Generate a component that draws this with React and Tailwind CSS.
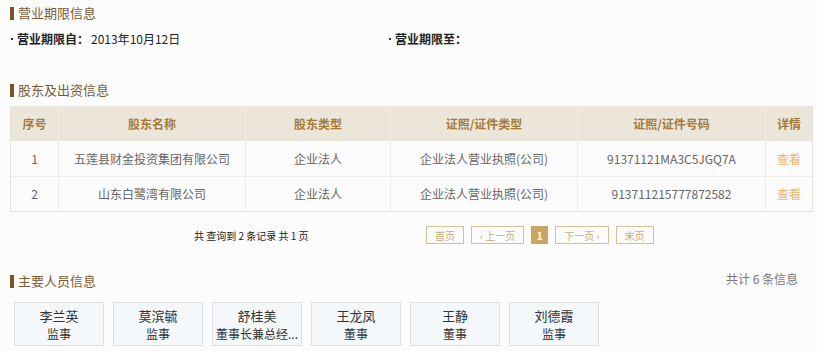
import React from 'react';

const FONT = '"Microsoft YaHei", "Noto Sans CJK SC", "Noto Sans", sans-serif';

const shareholders = [
    { id: 1, name: '五莲县财金投资集团有限公司', type: '企业法人', certType: '企业法人营业执照(公司)', certNo: '91371121MA3C5JGQ7A' },
    { id: 2, name: '山东白鹭湾有限公司', type: '企业法人', certType: '企业法人营业执照(公司)', certNo: '913711215777872582' },
];

const staff = [
    { name: '李兰英', role: '监事' },
    { name: '莫滨毓', role: '监事' },
    { name: '舒桂美', role: '董事长兼总经...' },
    { name: '王龙凤', role: '董事' },
    { name: '王静', role: '董事' },
    { name: '刘德霞', role: '监事' },
];

const cols = ['w-[48px]', 'w-[187px]', 'w-[145px]', 'w-[187px]', 'w-[188px]', 'flex-1'];

const SectionTitle = ({ children, right }) => (
    <div className="flex items-center justify-between h-[26px]">
        <div className="flex items-center">
            <span className="w-[4px] h-[13px] bg-[#7b5426] mr-[4px]" />
            <span className="text-[13px] text-[#7b5a34]">{children}</span>
        </div>
        {right && <span className="text-[12px] text-[#777] mr-[15px] -mt-[4px]">{right}</span>}
    </div>
);

const Dot = () => <span className="w-[2px] h-[2px] bg-[#333] ml-[1px] mr-[4px]" />;

const PageBtn = ({ children, active }) => (
    <div className={`h-[18px] flex items-center justify-center text-[10px] border ${active ? 'bg-[#c9a65e] border-[#c9a65e] text-white font-bold w-[17px]' : 'border-[#d7c094] text-[#c9ab75] px-[8px]'}`}>{children}</div>
);

export default function App() {
    return (
        <div className="w-[817px] h-[351px] overflow-hidden bg-[#fcfcfc] pl-[10px] pr-[4px]" style={{ fontFamily: FONT }}>
            <SectionTitle>营业期限信息</SectionTitle>
            <div className="flex items-center h-[26px] text-[12px] text-[#222]">
                <div className="flex items-center w-[378px]">
                    <Dot />
                    <span className="font-bold w-[74px]">营业期限自：</span>
                    <span>2013年10月12日</span>
                </div>
                <div className="flex items-center">
                    <Dot />
                    <span className="font-bold">营业期限至：</span>
                </div>
            </div>

            <div className="h-[25px]" />
            <SectionTitle>股东及出资信息</SectionTitle>
            <div className="mt-[3px] border border-[#e6e2da] text-[12px]">
                <div className="flex h-[34px] bg-[#ebe5da] text-[#a57b3a] font-bold">
                    {['序号', '股东名称', '股东类型', '证照/证件类型', '证照/证件号码', '详情'].map((h, i) => (
                        <div key={h} className={`${cols[i]} flex items-center justify-center ${i < 5 ? 'border-r border-[#f3efe8]' : ''}`}>{h}</div>
                    ))}
                </div>
                {shareholders.map((s, r) => (
                    <div key={s.id} className={`flex h-[35px] bg-[#fcfcfc] text-[#666] ${r > 0 ? 'border-t border-[#ececec]' : ''}`}>
                        {[s.id, s.name, s.type, s.certType, s.certNo].map((v, i) => (
                            <div key={i} className={`${cols[i]} flex items-center justify-center border-r border-[#ececec]`}>{v}</div>
                        ))}
                        <div className={`${cols[5]} flex items-center justify-center text-[#f0b36a]`}>查看</div>
                    </div>
                ))}
            </div>

            <div className="flex items-center h-[46px]">
                <span className="ml-[184px] w-[232px] text-[10px] text-[#222]">共 查询到 2 条记录 共 1 页</span>
                <div className="flex items-center gap-[7px]">
                    <PageBtn>首页</PageBtn>
                    <PageBtn>‹ 上一页</PageBtn>
                    <PageBtn active>1</PageBtn>
                    <PageBtn>下一页 ›</PageBtn>
                    <PageBtn>末页</PageBtn>
                </div>
            </div>

            <div className="h-[10px]" />
            <SectionTitle right="共计 6 条信息">主要人员信息</SectionTitle>
            <div className="flex gap-[9px] mt-[8px] ml-[4px]">
                {staff.map((p) => (
                    <div key={p.name} className="w-[90px] h-[44px] bg-[#f5f8fa] border border-[#dcdfe2] flex flex-col items-center justify-center text-[#333]">
                        <div className="text-[13px] leading-[18px]">{p.name}</div>
                        <div className="text-[12px] leading-[17px] whitespace-nowrap">{p.role}</div>
                    </div>
                ))}
            </div>
        </div>
    );
}
